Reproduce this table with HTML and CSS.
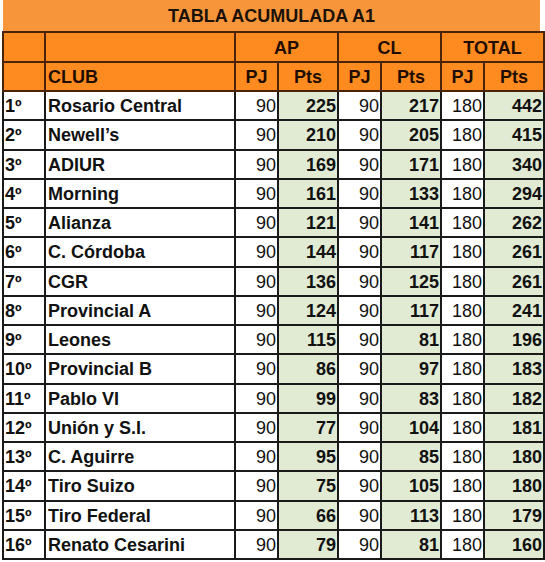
FILE: index.html
```html
<!DOCTYPE html>
<html lang="es">
<head>
<meta charset="utf-8">
<title>Tabla Acumulada A1</title>
<link rel="stylesheet" href="styles.css">
</head>
<body>
<div class="sheet">
  <div class="title">TABLA ACUMULADA A1</div>
  <table class="standings">
    <colgroup>
      <col class="c-pos"><col class="c-club">
      <col class="c-pj"><col class="c-pts">
      <col class="c-pj"><col class="c-pts">
      <col class="c-pj"><col class="c-pts">
    </colgroup>
    <thead>
      <tr class="h1">
        <th></th><th></th>
        <th colspan="2">AP</th>
        <th colspan="2">CL</th>
        <th colspan="2">TOTAL</th>
      </tr>
      <tr class="h2">
        <th></th><th class="left">CLUB</th>
        <th>PJ</th><th>Pts</th>
        <th>PJ</th><th>Pts</th>
        <th>PJ</th><th>Pts</th>
      </tr>
    </thead>
    <tbody>
      <tr><td class="pos">1º</td><td class="club">Rosario Central</td><td class="pj">90</td><td class="pts">225</td><td class="pj">90</td><td class="pts">217</td><td class="pj">180</td><td class="pts">442</td></tr>
      <tr><td class="pos">2º</td><td class="club">Newell’s</td><td class="pj">90</td><td class="pts">210</td><td class="pj">90</td><td class="pts">205</td><td class="pj">180</td><td class="pts">415</td></tr>
      <tr><td class="pos">3º</td><td class="club">ADIUR</td><td class="pj">90</td><td class="pts">169</td><td class="pj">90</td><td class="pts">171</td><td class="pj">180</td><td class="pts">340</td></tr>
      <tr><td class="pos">4º</td><td class="club">Morning</td><td class="pj">90</td><td class="pts">161</td><td class="pj">90</td><td class="pts">133</td><td class="pj">180</td><td class="pts">294</td></tr>
      <tr><td class="pos">5º</td><td class="club">Alianza</td><td class="pj">90</td><td class="pts">121</td><td class="pj">90</td><td class="pts">141</td><td class="pj">180</td><td class="pts">262</td></tr>
      <tr><td class="pos">6º</td><td class="club">C. Córdoba</td><td class="pj">90</td><td class="pts">144</td><td class="pj">90</td><td class="pts">117</td><td class="pj">180</td><td class="pts">261</td></tr>
      <tr><td class="pos">7º</td><td class="club">CGR</td><td class="pj">90</td><td class="pts">136</td><td class="pj">90</td><td class="pts">125</td><td class="pj">180</td><td class="pts">261</td></tr>
      <tr><td class="pos">8º</td><td class="club">Provincial A</td><td class="pj">90</td><td class="pts">124</td><td class="pj">90</td><td class="pts">117</td><td class="pj">180</td><td class="pts">241</td></tr>
      <tr><td class="pos">9º</td><td class="club">Leones</td><td class="pj">90</td><td class="pts">115</td><td class="pj">90</td><td class="pts">81</td><td class="pj">180</td><td class="pts">196</td></tr>
      <tr><td class="pos">10º</td><td class="club">Provincial B</td><td class="pj">90</td><td class="pts">86</td><td class="pj">90</td><td class="pts">97</td><td class="pj">180</td><td class="pts">183</td></tr>
      <tr><td class="pos">11º</td><td class="club">Pablo VI</td><td class="pj">90</td><td class="pts">99</td><td class="pj">90</td><td class="pts">83</td><td class="pj">180</td><td class="pts">182</td></tr>
      <tr><td class="pos">12º</td><td class="club">Unión y S.I.</td><td class="pj">90</td><td class="pts">77</td><td class="pj">90</td><td class="pts">104</td><td class="pj">180</td><td class="pts">181</td></tr>
      <tr><td class="pos">13º</td><td class="club">C. Aguirre</td><td class="pj">90</td><td class="pts">95</td><td class="pj">90</td><td class="pts">85</td><td class="pj">180</td><td class="pts">180</td></tr>
      <tr><td class="pos">14º</td><td class="club">Tiro Suizo</td><td class="pj">90</td><td class="pts">75</td><td class="pj">90</td><td class="pts">105</td><td class="pj">180</td><td class="pts">180</td></tr>
      <tr><td class="pos">15º</td><td class="club">Tiro Federal</td><td class="pj">90</td><td class="pts">66</td><td class="pj">90</td><td class="pts">113</td><td class="pj">180</td><td class="pts">179</td></tr>
      <tr><td class="pos">16º</td><td class="club">Renato Cesarini</td><td class="pj">90</td><td class="pts">79</td><td class="pj">90</td><td class="pts">81</td><td class="pj">180</td><td class="pts">160</td></tr>
    </tbody>
  </table>
</div>
</body>
</html>
```

FILE: styles.css
```css
html, body {
  margin: 0;
  padding: 0;
  background: #ffffff;
}

.sheet {
  padding: 0 0 0 2px;
  width: 542px;
  font-family: "Liberation Sans", Arial, sans-serif;
  color: #111111;
}

.title {
  margin-left: 1px;
  width: 537px;
  height: 31px;
  background: #f7953b;
  color: #1a1208;
  font-weight: bold;
  font-size: 18px;
  line-height: 33px;
  text-align: center;
}

.standings {
  border-collapse: collapse;
  table-layout: fixed;
  width: 541px;
  font-size: 18px;
}

.c-pos { width: 42px; }
.c-club { width: 190px; }
.c-pj { width: 43px; }
.c-pts { width: 60px; }

.standings th,
.standings td {
  padding: 0 2px 0 2px;
  white-space: nowrap;
  overflow: hidden;
}

.standings th {
  background: #fd8b1f;
  color: #1f0d00;
  font-weight: bold;
  text-align: center;
  border: 2px solid #4a2408;
}

.standings th.left {
  text-align: left;
}

.h1 th { height: 26px; padding-top: 2px; }
.h2 th { height: 25px; padding-top: 2px; }

.standings td {
  border: 2px solid #1a1a1a;
  height: 25.25px;
  padding-top: 2px;
}

.pos {
  font-weight: bold;
  text-align: left;
  padding-left: 1px !important;
}

.club {
  font-weight: bold;
  text-align: left;
}

.pj {
  text-align: right;
  padding-right: 1px !important;
}

.pts {
  font-weight: bold;
  text-align: right;
  background: #e1ead3;
  padding-right: 1px !important;
}
```
